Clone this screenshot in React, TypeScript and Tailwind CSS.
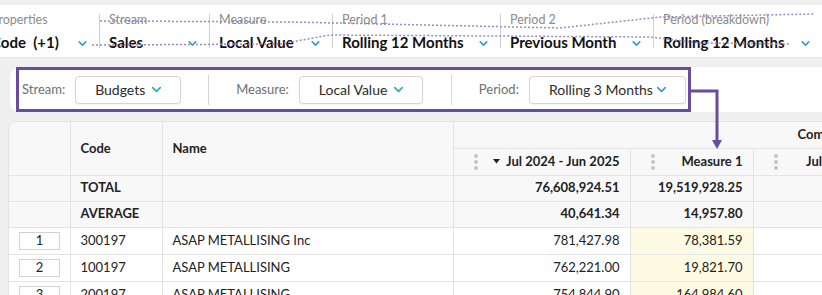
import { ChevronDown } from 'lucide-react';

const topFields = [
  { label: 'Properties', value: 'Code  (+1)', width: 'w-[108px]', first: true },
  { label: 'Stream', value: 'Sales', width: 'w-[110px]' },
  { label: 'Measure', value: 'Local Value', width: 'w-[123px]' },
  { label: 'Period 1', value: 'Rolling 12 Months', width: 'w-[168px]' },
  { label: 'Period 2', value: 'Previous Month', width: 'w-[153px]' },
  { label: 'Period (breakdown)', value: 'Rolling 12 Months', width: 'w-[169px]' },
];

const rows = [
  { n: 1, code: '300197', name: 'ASAP METALLISING Inc', v1: '781,427.98', v2: '78,381.59' },
  { n: 2, code: '100197', name: 'ASAP METALLISING', v1: '762,221.00', v2: '19,821.70' },
  { n: 3, code: '200197', name: 'ASAP METALLISING', v1: '754,844.90', v2: '164,984.60' },
];

function Grip() {
  return (
    <span className="flex flex-col gap-[2px] shrink-0">
      <span className="w-[4px] h-[4px] rounded-full bg-[#c4c4c4]"></span>
      <span className="w-[4px] h-[4px] rounded-full bg-[#c4c4c4]"></span>
      <span className="w-[4px] h-[4px] rounded-full bg-[#c4c4c4]"></span>
    </span>
  );
}

function Picker({ label, value, width }: { label: string; value: string; width: string }) {
  return (
    <div className="flex items-center gap-[10px]">
      <span className="text-[13px] text-[#707070]">{label}</span>
      <div
        className={`${width} h-[28px] flex items-center justify-between pl-[19px] pr-[16px] bg-white border border-[#d4d4d4] rounded-[4px] shadow-[0_1px_1px_rgba(0,0,0,0.06)]`}
      >
        <span className="text-[14px] text-[#2b2b2b]">{value}</span>
        <ChevronDown className="w-[15px] h-[15px] text-[#2aa4c6]" strokeWidth={2.5} />
      </div>
    </div>
  );
}

export default function App() {
  const cell = 'border border-[#e3e3e3] px-[10px] text-[13px] text-[#222] whitespace-nowrap overflow-hidden';

  return (
    <div className="relative w-[822px] h-[295px] overflow-hidden bg-[#efefef] font-['Lato',sans-serif]">
      <div className="h-[5px]"></div>

      {/* Top filter bar */}
      <div className="h-[53px] bg-white border-b border-[#e6e6e6] flex overflow-hidden">
        {topFields.map((f) => (
          <div
            key={f.label}
            className={`${f.width} shrink-0 flex flex-col justify-center ${
              f.first ? 'ml-[-9px] pl-0' : 'pl-[9px] border-l border-[#cfcfcf]'
            } my-[9px] pr-[10px]`}
          >
            <span className="text-[12.5px] leading-[15px] text-[#8a8a8a]">{f.label}</span>
            <div className="flex items-center justify-between mt-[6px]">
              <span className="text-[15px] leading-[18px] font-bold text-[#111] whitespace-pre">{f.value}</span>
              <ChevronDown className="w-[13px] h-[13px] text-[#2aa4c6] mt-[3px]" strokeWidth={3} />
            </div>
          </div>
        ))}
      </div>

      {/* Toolbar */}
      <div className="ml-[10px] mt-[9px] h-[45px] bg-white rounded-l-[10px] flex items-stretch pl-[6px]">
        <div className="w-[675px] border-[3px] border-[#6a4c9c] flex items-center pl-[3px]">
          <Picker label="Stream:" value="Budgets" width="w-[106px]" />
          <div className="w-px h-[30px] bg-[#d6d6d6] ml-[27px] mr-[27px]"></div>
          <Picker label="Measure:" value="Local Value" width="w-[124px]" />
          <div className="w-px h-[30px] bg-[#d6d6d6] ml-[28px] mr-[27px]"></div>
          <Picker label="Period:" value="Rolling 3 Months" width="w-[157px]" />
        </div>
      </div>

      {/* Grid */}
      <div className="ml-[8px] mt-[9px] bg-white rounded-tl-[8px] overflow-hidden border-l border-t border-[#e3e3e3]">
        <table className="table-fixed border-collapse w-[1212px]">
          <colgroup>
            <col className="w-[61px]" />
            <col className="w-[92px]" />
            <col className="w-[291px]" />
            <col className="w-[177px]" />
            <col className="w-[123px]" />
            <col className="w-[177px]" />
            <col className="w-[291px]" />
          </colgroup>
          <thead>
            <tr className="h-[26px] bg-[#f8f8f8]">
              <th rowSpan={2} className={`${cell} border-t-0 border-l-0`}></th>
              <th rowSpan={2} className={`${cell} border-t-0 text-left font-bold`}>Code</th>
              <th rowSpan={2} className={`${cell} border-t-0 text-left font-bold`}>Name</th>
              <th colSpan={4} className={`${cell} border-t-0 text-left font-bold pl-[344px]`}>Comparison</th>
            </tr>
            <tr className="h-[27px] bg-[#f8f8f8]">
              <th className={`${cell} font-bold pl-[20px]`}>
                <div className="flex items-center justify-between">
                  <Grip />
                  <span className="flex items-center gap-[6px]">
                    <svg width="7" height="5" viewBox="0 0 7 5">
                      <polygon points="0,0 7,0 3.5,4.5" fill="#222" />
                    </svg>
                    Jul 2024 - Jun 2025
                  </span>
                </div>
              </th>
              <th className={`${cell} font-bold pl-[20px]`}>
                <div className="flex items-center justify-between">
                  <Grip />
                  <span>Measure 1</span>
                </div>
              </th>
              <th className={`${cell} font-bold pl-[20px]`}>
                <div className="flex items-center justify-between">
                  <Grip />
                  <span>Jul 2024 - Jun 2025</span>
                </div>
              </th>
              <th className={`${cell} font-bold pl-[20px]`}>
                <div className="flex items-center justify-between">
                  <Grip />
                  <span>Measure 1</span>
                </div>
              </th>
            </tr>
          </thead>
          <tbody>
            <tr className="h-[26px] bg-[#f8f8f8] font-bold">
              <td className={`${cell} border-l-0`}></td>
              <td className={cell}>TOTAL</td>
              <td className={cell}></td>
              <td className={`${cell} text-right`}>76,608,924.51</td>
              <td className={`${cell} text-right`}>19,519,928.25</td>
              <td className={cell}></td>
              <td className={cell}></td>
            </tr>
            <tr className="h-[26px] bg-[#f8f8f8] font-bold">
              <td className={`${cell} border-l-0`}></td>
              <td className={cell}>AVERAGE</td>
              <td className={cell}></td>
              <td className={`${cell} text-right`}>40,641.34</td>
              <td className={`${cell} text-right`}>14,957.80</td>
              <td className={cell}></td>
              <td className={cell}></td>
            </tr>
            {rows.map((r) => (
              <tr key={r.n} className="h-[27px]">
                <td className={`${cell} border-l-0 px-[9px]`}>
                  <div className="w-[41px] h-[18px] border border-[#d2d2d2] flex items-center justify-center text-[13px]">
                    {r.n}
                  </div>
                </td>
                <td className={cell}>{r.code}</td>
                <td className={cell}>{r.name}</td>
                <td className={`${cell} text-right`}>{r.v1}</td>
                <td className={`${cell} text-right bg-[#fdfbe3]`}>{r.v2}</td>
                <td className={cell}></td>
                <td className={cell}></td>
              </tr>
            ))}
          </tbody>
        </table>
      </div>

      {/* Annotation overlay */}
      <svg className="absolute top-0 left-0 pointer-events-none" width="822" height="295">
        <polyline
          points="100,21 290,22 560,28 660,17 815,14"
          fill="none"
          stroke="#9a88c4"
          strokeWidth="1.5"
          strokeDasharray="2 2"
        />
        <polyline
          points="92,45 280,44 330,35 650,37 700,43 790,44"
          fill="none"
          stroke="#9a88c4"
          strokeWidth="1.5"
          strokeDasharray="2 2"
        />
        <polyline points="691,91 717,91 717,141" fill="none" stroke="#6a4c9c" strokeWidth="3" />
        <polygon points="712,140 722,140 717,149" fill="#6a4c9c" />
      </svg>
    </div>
  );
}
